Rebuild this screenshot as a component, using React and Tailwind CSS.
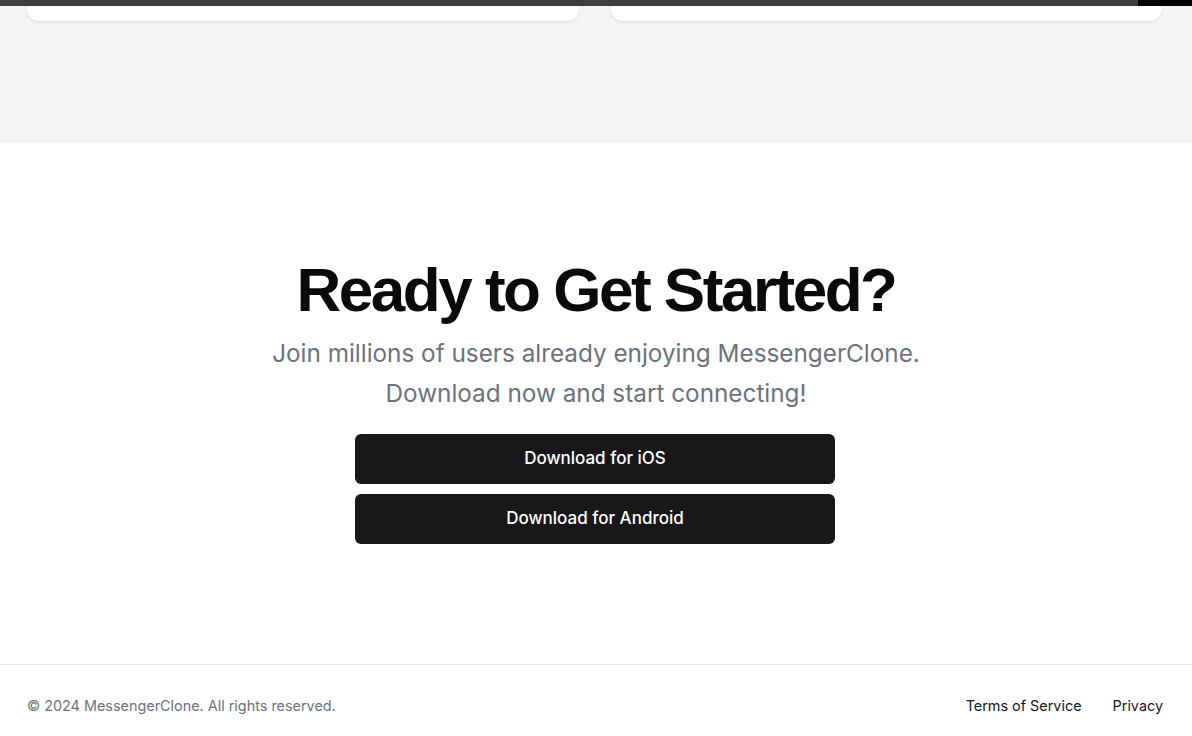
export default function App() {
  return (
    <div className="min-h-[736px] bg-white" style={{ fontFamily: "Inter, 'Liberation Sans', sans-serif" }}>
      <div className="flex h-[6px]">
        <div className="flex-1 bg-[#3e3e3e]" />
        <div className="w-[54px] bg-black" />
      </div>
      <section className="bg-[#f3f4f6] h-[137px]">
        <div className="grid grid-cols-2 gap-8 px-[27px] pr-[30px]">
          <div className="h-[15px] bg-white rounded-b-xl shadow-[0_1px_3px_rgba(0,0,0,0.1)]" />
          <div className="h-[15px] bg-white rounded-b-xl shadow-[0_1px_3px_rgba(0,0,0,0.1)]" />
        </div>
      </section>
      <section className="flex flex-col items-center pt-[116px] pb-[120px]">
        <h2 className="text-[62px] leading-none font-bold tracking-[-0.04em] text-[#0a0a0a]" style={{ fontFamily: "'Liberation Sans', Arial, sans-serif" }}>
          Ready to Get Started?
        </h2>
        <p className="mt-[12px] text-[24.3px] leading-[40px] text-[#6b7280] text-center">
          Join millions of users already enjoying MessengerClone.
          <br />
          Download now and start connecting!
        </p>
        <div className="mt-[21px] flex flex-col gap-[10px] w-[480px] -translate-x-px">
          <button className="h-[50px] rounded-md bg-[#18181b] text-white text-[17px] font-medium">Download for iOS</button>
          <button className="h-[50px] rounded-md bg-[#18181b] text-white text-[17px] font-medium">Download for Android</button>
        </div>
      </section>
      <footer className="border-t border-[#e5e7eb] flex items-center justify-between px-[27px] pr-[29px] pt-[2px] h-[80px] text-[14.4px]">
        <span className="text-[#6b7280]">© 2024 MessengerClone. All rights reserved.</span>
        <div className="flex gap-[31px] text-[#111827]">
          <a>Terms of Service</a>
          <a>Privacy</a>
        </div>
      </footer>
    </div>
  );
}
